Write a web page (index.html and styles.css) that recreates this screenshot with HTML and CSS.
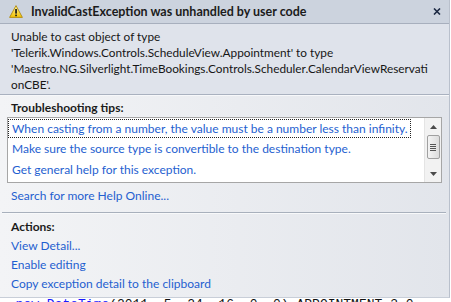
FILE: index.html
```html
<!DOCTYPE html>
<html>
<head>
<meta charset="utf-8">
<link rel="stylesheet" href="styles.css">
</head>
<body>
<div class="dialog">
  <div class="header">
    <svg class="warn" width="14" height="13" viewBox="0 0 14 13">
      <defs>
        <linearGradient id="wg" x1="0" y1="0" x2="0" y2="1">
          <stop offset="0" stop-color="#fff2a0"/>
          <stop offset="1" stop-color="#f2c200"/>
        </linearGradient>
      </defs>
      <path d="M7 0.6 L13.4 12.4 L0.6 12.4 Z" fill="url(#wg)" stroke="#b08a10" stroke-width="0.9" stroke-linejoin="round"/>
      <rect x="6.2" y="4" width="1.7" height="4.6" fill="#1a1a1a"/>
      <rect x="6.2" y="9.6" width="1.7" height="1.6" fill="#1a1a1a"/>
    </svg>
    <span class="title">InvalidCastException was unhandled by user code</span>
    <svg class="close" width="8" height="7" viewBox="0 0 8 7">
      <path d="M1 0.5 L7 6.5 M7 0.5 L1 6.5" stroke="#1d2a44" stroke-width="1.6"/>
    </svg>
  </div>
  <div class="message">
    <div class="line">Unable to cast object of type</div>
    <div class="line">'Telerik.Windows.Controls.ScheduleView.Appointment' to type</div>
    <div class="line">'Maestro.NG.Silverlight.TimeBookings.Controls.Scheduler.CalendarViewReservati</div>
    <div class="line">onCBE'.</div>
  </div>
  <div class="lower">
    <div class="heading">Troubleshooting tips:</div>
    <div class="listbox">
      <div class="items">
        <div class="item focused">When casting from a number, the value must be a number less than infinity.</div>
        <div class="item">Make sure the source type is convertible to the destination type.</div>
        <div class="item">Get general help for this exception.</div>
      </div>
      <div class="scrollbar">
        <div class="arrow">
          <svg width="7" height="4" viewBox="0 0 7 4"><path d="M3.5 0 L7 4 L0 4 Z" fill="#4a4a4a"/></svg>
        </div>
        <div class="thumb">
          <span class="grip"></span><span class="grip"></span><span class="grip"></span><span class="grip"></span>
        </div>
        <div class="track"></div>
        <div class="arrow">
          <svg width="7" height="4" viewBox="0 0 7 4"><path d="M0 0 L7 0 L3.5 4 Z" fill="#4a4a4a"/></svg>
        </div>
      </div>
    </div>
    <div class="link search">Search for more Help Online...</div>
    <div class="divider"></div>
    <div class="heading actions">Actions:</div>
    <div class="link action">View Detail...</div>
    <div class="link action">Enable editing</div>
    <div class="link action">Copy exception detail to the clipboard</div>
  </div>
</div>
<div class="code"><span class="kw">  new</span> <span class="kw">DateTime</span>(<span>2011, 5, 24, 16, 0, 0</span>) <span>APPOINTMENT</span> <span>3.0</span></div>
</body>
</html>
```
FILE: styles.css
```css
html, body {
  margin: 0;
  padding: 0;
  background: #ffffff;
}
body {
  width: 451px;
  height: 302px;
  overflow: hidden;
  font-family: Lato, "Open Sans", sans-serif;
  font-size: 12px;
  color: #1e1e1e;
}
.dialog {
  width: 449px;
  height: 297px;
  border-right: 1px solid #b9c0cc;
  border-bottom: 1px solid #c8ced8;
  display: flex;
  flex-direction: column;
  background: linear-gradient(to right, #f3f4f6, #e2e5eb);
}
.header {
  height: 23px;
  flex: none;
  background: #ccd3de;
  border-bottom: 1px solid #a7afbd;
  display: flex;
  align-items: center;
}
.warn {
  margin-left: 9px;
  margin-right: 8px;
  margin-top: -1px;
}
.title {
  font-weight: 700;
  font-size: 12.5px;
  color: #1b1b1b;
  flex: 1;
  margin-top: -1px;
}
.close {
  margin-right: 8px;
  margin-top: -1px;
}
.message {
  flex: none;
  background: #dfe3eb;
  padding: 5px 11px 1px;
  border-bottom: 1px solid #a9b1bf;
  font-size: 11.8px;
  color: #161616;
}
.line {
  height: 16px;
  line-height: 16px;
  white-space: nowrap;
}
.lower {
  flex: 1;
  display: flex;
  flex-direction: column;
  padding-top: 4px;
  border-top: 1px solid #f7f8fa;
}
.heading {
  font-weight: 700;
  height: 16px;
  line-height: 16px;
  padding-left: 11px;
  color: #1b1b1b;
}
.listbox {
  margin: 1px 0 0 7px;
  width: 433px;
  height: 64px;
  border: 1px solid #a6a6a6;
  background: #ffffff;
  display: flex;
}
.items {
  flex: 1;
}
.item {
  height: 21px;
  line-height: 19px;
  padding-left: 4px;
  color: #1f5fd0;
  white-space: nowrap;
}
.item.focused {
  height: 17px;
  line-height: 17px;
  border: 1px dotted #222;
  margin: 1px 1px 1px 0;
  padding-left: 3px;
  width: max-content;
  padding-right: 2px;
}
.scrollbar {
  width: 16px;
  flex: none;
  background: #f2f2f2;
  border-left: 1px solid #e4e4e4;
  display: flex;
  flex-direction: column;
  align-items: center;
}
.arrow {
  height: 17px;
  width: 16px;
  display: flex;
  align-items: center;
  justify-content: center;
}
.thumb {
  width: 13px;
  height: 24px;
  box-sizing: border-box;
  border: 1px solid #a0a0a0;
  border-radius: 2px;
  background: linear-gradient(to right, #f4f4f4, #dcdcdc);
  display: flex;
  flex-direction: column;
  align-items: center;
  justify-content: center;
  gap: 1px;
}
.grip {
  width: 6px;
  height: 1px;
  background: #555;
}
.track {
  flex: 1;
}
.link {
  color: #1f5fd0;
  padding-left: 11px;
  white-space: nowrap;
}
.search {
  height: 19px;
  line-height: 19px;
  margin-top: 3px;
}
.divider {
  margin: 7px 3px 0 2px;
  height: 0;
  border-top: 1px solid #a8b0bc;
  border-bottom: 1px solid #f8f9fa;
}
.actions {
  margin-top: 4px;
  height: 18px;
  line-height: 18px;
}
.action {
  height: 19px;
  line-height: 19px;
}
.code {
  height: 4px;
  overflow: hidden;
  font-family: "Liberation Mono", monospace;
  font-size: 13px;
  line-height: 13px;
  white-space: pre;
  color: #111;
  margin-top: -1px;
  padding-top: 1px;
}
.kw {
  color: #1a1aff;
}
```
